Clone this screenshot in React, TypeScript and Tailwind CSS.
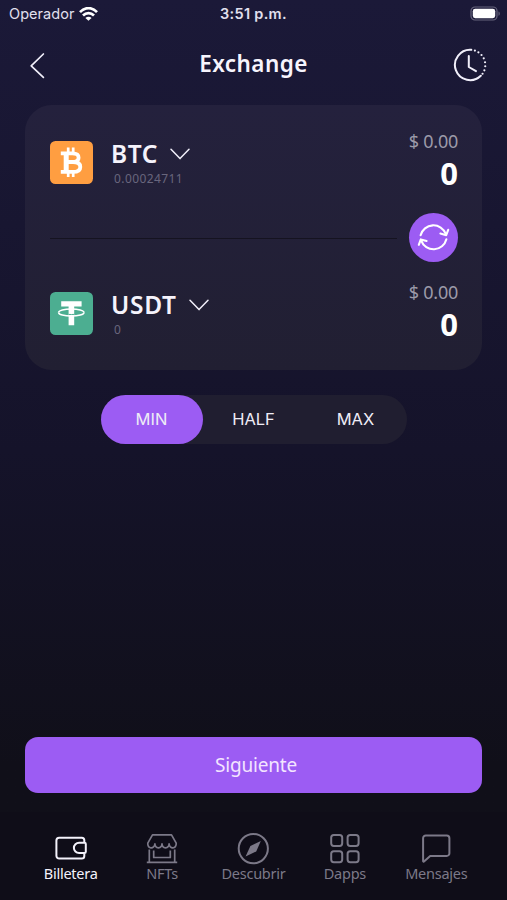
import type { ReactNode } from "react";

interface TokenRowProps {
  icon: ReactNode;
  symbol: string;
  balance: string;
  symbolClass: string;
}

const ChevronDown = () => (
  <svg width="20" height="12" viewBox="0 0 20 12" fill="none" stroke="#f1effa" strokeWidth="1.5" strokeLinecap="round" strokeLinejoin="round">
    <path d="M1 1.2 10 10.6 19 1.2" />
  </svg>
);

const BitcoinIcon = () => (
  <svg width="43" height="43" viewBox="0 0 43 43" fill="none">
    <rect width="43" height="43" rx="5.5" fill="#ff9e41" />
    <g stroke="#fff">
      <path d="M18.2 6.5v6M23.2 6.5v6M18.2 30.5v5.5M23.2 30.5v5.5" strokeWidth="2.7" />
      <path d="M10.8 12.4h11.6c4.4 0 6.2 1.7 6.2 4.3S26.8 21 22.4 21h-6M23 21c5 0 7.3 1.6 7.3 4.9s-2.4 5-7.3 5H10.8" strokeWidth="3.8" />
      <path d="M16.2 12.5v18" strokeWidth="5" />
    </g>
  </svg>
);

const TetherIcon = () => (
  <svg width="43" height="43" viewBox="0 0 43 43" fill="none">
    <rect width="43" height="43" rx="5.5" fill="#4cae91" />
    <path d="M8.6 20.4c0-1.9 5.7-3.5 12.7-3.5S34 18.5 34 20.4" stroke="#fff" strokeWidth="1.5" />
    <path d="M11.2 9.2h20.4v5.4h-7.4v18.6h-5.6V14.6h-7.4z" fill="#fff" />
    <path d="M18.6 22.4q2.7.2 5.6 0" stroke="#4cae91" strokeWidth="1" />
    <path d="M8.6 20.4c0 2 5.7 3.6 12.7 3.6S34 22.4 34 20.4" stroke="#fff" strokeWidth="1.6" />
  </svg>
);

const TokenRow = ({ icon, symbol, balance, symbolClass }: TokenRowProps) => (
  <div className="flex h-[61px] justify-between">
    <div className="flex">
      <div className="mt-[10.5px]">{icon}</div>
      <div className="ml-[18px] mt-[8px]">
        <div className="flex h-[31px] items-center gap-[12px]">
          <span className={`text-[24.5px] leading-[30px] font-semibold text-[#f5f3fb] ${symbolClass}`}>{symbol}</span>
          <ChevronDown />
        </div>
        <p className="mt-[2px] ml-[3px] text-[12px] leading-[16px] tracking-[0.4px] text-[#69667d]">{balance}</p>
      </div>
    </div>
    <div className="text-right">
      <p className="mt-px text-[18px] leading-[20px] tracking-[-0.25px] text-[#9c9aa9]">$ 0.00</p>
      <p className="mt-[4px] text-[31px] leading-[36px] font-bold text-white">0</p>
    </div>
  </div>
);

const tabs = [
  {
    label: "Billetera",
    color: "text-[#f4f2fb]",
    icon: (
      <>
        <path d="M30.3 10V8.3a2.5 2.5 0 0 0-2.5-2.5H5.2A2.8 2.8 0 0 0 2.4 8.6v15.2a2.8 2.8 0 0 0 2.8 2.8h22.6a2.5 2.5 0 0 0 2.5-2.5v-2.3" />
        <path d="M30.5 10.7h-5.4a5.2 5.2 0 0 0 0 10.4h5.4a1.3 1.3 0 0 0 1.3-1.3V12a1.3 1.3 0 0 0-1.3-1.3Z" />
      </>
    ),
  },
  {
    label: "NFTs",
    color: "text-[#7c7988]",
    icon: (
      <g strokeWidth="1.7">
        <path d="M7.5 2.8h19l4.7 8.4c.5 6-6.8 6.2-7.1.6-.2 5.3-7 5.3-7.1 0-.2 5.3-7 5.3-7.1 0-.3 5.6-7.8 5.4-7.1-.6z" />
        <path d="M4.3 17.5V30M29.7 17.5V30M1.8 30.3h30.4" />
        <path d="M8.7 18.5v7h16.6v-7" />
      </g>
    ),
  },
  {
    label: "Descubrir",
    color: "text-[#7c7988]",
    icon: (
      <>
        <circle cx="17.3" cy="16.6" r="14.6" />
        <path d="m24.8 9-4.6 10.4L9.6 24.5l4.8-10.6z" fill="currentColor" strokeWidth="0" />
      </>
    ),
  },
  {
    label: "Dapps",
    color: "text-[#7c7988]",
    icon: (
      <>
        <rect x="3.2" y="2.9" width="11" height="11" rx="2.6" />
        <rect x="19.6" y="2.9" width="11" height="11" rx="2.6" />
        <rect x="3.2" y="19.2" width="11" height="11" rx="2.6" />
        <rect x="19.6" y="19.2" width="11" height="11" rx="2.6" />
      </>
    ),
  },
  {
    label: "Mensajes",
    color: "text-[#7c7988]",
    icon: <path d="M6.8 3.5h20.9a2.7 2.7 0 0 1 2.7 2.7v15a2.7 2.7 0 0 1-2.7 2.7H11.2l-6.2 5.6a.5.5 0 0 1-.9-.4V6.2a2.7 2.7 0 0 1 2.7-2.7Z" />,
  },
];

export default function App() {
  return (
    <div className="flex h-[900px] w-[507px] flex-col bg-linear-to-b from-[#1b1938] via-[#15132a] via-50% to-[#100f19] to-85% font-['Noto_Sans',sans-serif]">
      {/* Status bar */}
      <div className="grid h-[28px] grid-cols-[1fr_auto_1fr] items-center pr-[6px] pl-[9px] font-['Inter',sans-serif] text-[14.5px] text-[#e2e0ee]">
        <div className="flex items-center gap-[5px]">
          <span className="tracking-[0.05px]">Operador</span>
          <svg className="-mt-px" width="19" height="14" viewBox="0 0 19 14" fill="none" stroke="#fff" strokeWidth="2.7">
            <path d="M1 5.1C6-.2 13-.2 18 5.1M4 8.5c3.2-3.2 7.8-3.2 11 0" />
            <path d="M9.5 13.8 6.4 10.9c1.7-1.5 4.5-1.5 6.2 0z" fill="#fff" stroke="none" />
          </svg>
        </div>
        <span className="-ml-[3px] font-semibold tracking-[0.3px]">3:51 p.m.</span>
        <svg className="-mt-px justify-self-end" width="31" height="16" viewBox="0 0 31 16" fill="none">
          <rect x="1" y="1" width="26" height="13" rx="4" stroke="#67647c" strokeWidth="1.2" />
          <rect x="2.8" y="2.8" width="22.4" height="9.4" rx="2.4" fill="#fff" />
          <path d="M28.5 5.5c1.7.5 1.7 3.8 0 4.3z" fill="#67647c" />
        </svg>
      </div>

      {/* Header */}
      <div className="grid h-[77px] grid-cols-[1fr_auto_1fr] items-center px-[20px] pb-[5px]">
        <svg className="ml-[9px] mt-[2px]" width="17" height="27" viewBox="0 0 17 27" fill="none" stroke="#f1effa" strokeWidth="1.7" strokeLinecap="round" strokeLinejoin="round">
          <path d="M14.4 2 2.2 13.8 14.4 25.4" />
        </svg>
        <h1 className="-mt-px text-[22.5px] leading-[30px] font-semibold tracking-[0.45px] text-[#f7f5fd]">Exchange</h1>
        <svg className="mt-[2px] justify-self-end" width="34" height="34" viewBox="0 0 34 34" fill="none" stroke="#f1effa" strokeWidth="2" strokeLinecap="round" strokeLinejoin="round">
          <path d="M18.3 1.8a15.2 15.2 0 1 0 9.5 26" />
          <path d="M21.9 2.6A15.2 15.2 0 0 1 29.5 25.8" strokeWidth="2.2" strokeDasharray="0 4" />
          <path d="M15.8 8v11l7.2 4.1" />
        </svg>
      </div>

      <div className="mx-[25px] h-[265px] rounded-[27px] bg-linear-to-b from-[#24213d] to-[#211f32] py-[25px] pr-[24px] pl-[25px]">
        <TokenRow icon={<BitcoinIcon />} symbol="BTC" balance="0.00024711" symbolClass="tracking-[0.6px]" />
        <div className="mt-[22px] mb-[19px] flex items-center gap-[12px]">
          <div className="mt-px h-px flex-1 bg-[#151320]" />
          <button className="flex size-[49px] items-center justify-center rounded-full bg-[#9c5cf3]">
            <svg width="33" height="31" viewBox="0 0 33 31" fill="none" stroke="#fff" strokeWidth="2.1" strokeLinecap="round" strokeLinejoin="round">
              <path d="M3.6 13.3A13.2 13.2 0 0 1 28.8 12M29.4 17.3A13.2 13.2 0 0 1 4.2 18.6" />
              <path d="m23.4 11.6 5.8 1.6 2-5.4M9.6 19l-5.8-1.6-2 5.4" />
            </svg>
          </button>
        </div>
        <TokenRow icon={<TetherIcon />} symbol="USDT" balance="0" symbolClass="tracking-[0.7px]" />
      </div>

      {/* Amount presets */}
      <div className="mt-[25px] grid h-[49px] w-[306px] grid-cols-3 self-center rounded-full bg-[#201e30] font-['Inter',sans-serif] text-[16.5px] text-[#eeecf6]">
        <button className="rounded-full bg-[#9c5cf3]">MIN</button>
        <button>HALF</button>
        <button>MAX</button>
      </div>

      <button className="mx-[25px] mt-auto h-[56px] rounded-[13px] bg-[#9c5cf3] pl-[5px] text-[19px] tracking-[-0.2px] text-[#f3e5ff]">Siguiente</button>

      <nav className="mt-[19px] grid h-[88px] grid-cols-5 bg-[#0f0d18] px-[25px] pt-[20px]">
        {tabs.map(({ label, color, icon }) => (
          <div key={label} className={`flex flex-col items-center ${color}`}>
            <svg width="34" height="34" viewBox="0 0 34 34" fill="none" stroke="currentColor" strokeWidth="2" strokeLinejoin="round">
              {icon}
            </svg>
            <span className="-mt-px text-[14.5px] leading-[16px] tracking-[-0.25px]">{label}</span>
          </div>
        ))}
      </nav>
    </div>
  );
}
